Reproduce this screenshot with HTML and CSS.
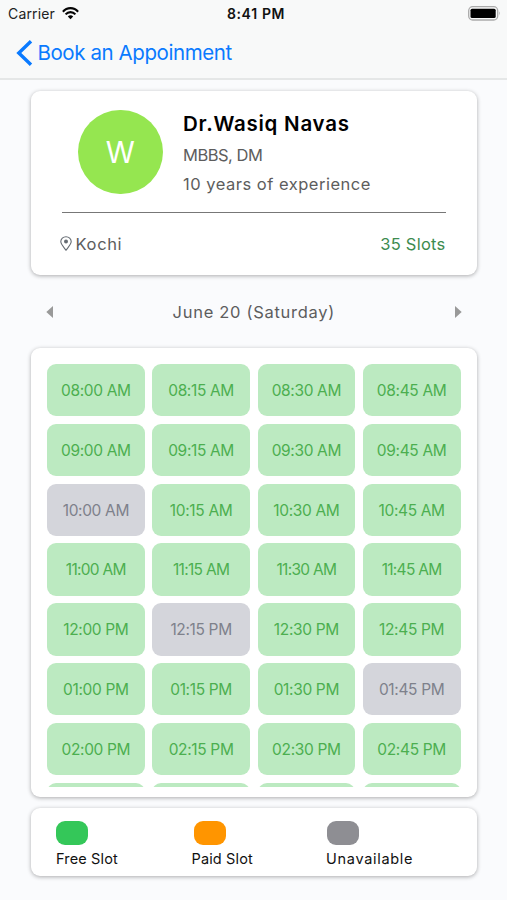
FILE: index.html
```html
<!DOCTYPE html>
<html lang="en">
<head>
<meta charset="utf-8">
<title>Book an Appoinment</title>
<link rel="stylesheet" href="styles.css">
</head>
<body>
<header class="top">
  <div class="status">
    <div class="carrier"><span>Carrier</span>
      <svg class="wifi" width="17" height="13" viewBox="0 0 17 13" fill="none" stroke="#050505" stroke-width="2.1"><path d="M.9 4.7C5-.1 12 -.1 16.100 4.700M3.600 7.400C6.300 4.300 10.700 4.300 13.400 7.400"/><path d="M8.500 12.300 5.800 9.500C7.200 7.900 9.800 7.900 11.200 9.500Z" fill="#050505" stroke="none"/></svg>
    </div>
    <div class="time">8:41 PM</div>
    <svg class="battery" width="33" height="15" viewBox="0 0 33 15"><rect x=".7" y=".7" width="29" height="13.300" rx="4" fill="#f8f9f9" stroke="#aaa" stroke-width="1.300"/><rect x="2.500" y="2.700" width="25.200" height="9.400" rx="1.600" fill="#000"/><path d="M31 5.200q1.500 2.100 0 4.200z" fill="#999"/></svg>
  </div>
  <div class="nav">
    <svg class="back" width="17" height="26" viewBox="0 0 17 26" fill="none" stroke="#0a7aff" stroke-width="3.400"><path d="M15 1.300 2.800 13 15 24.700"/></svg>
    <span>Book an Appoinment</span>
  </div>
</header>
<main>
  <section class="card doctor">
    <div class="profile">
      <div class="avatar">W</div>
      <div class="info">
        <h1>Dr.Wasiq Navas</h1>
        <p class="degree">MBBS, DM</p>
        <p class="years">10 years of experience</p>
      </div>
    </div>
    <div class="place">
      <div class="city"><svg width="12" height="15" viewBox="0 0 12 15"><path d="M6 14.200C4.300 11.600.8 8.600.8 5.600a5.200 4.900 0 0 1 10.400 0C11.200 8.600 7.700 11.600 6 14.200Z" fill="none" stroke="#666c73" stroke-width="1.100"/><circle cx="6" cy="5.600" r="2" fill="#666c73"/></svg><span>Kochi</span></div>
      <div class="count">35 Slots</div>
    </div>
  </section>
  <div class="date">
    <svg width="7" height="12" viewBox="0 0 7 12"><path d="M7 0v12L.3 6z" fill="#999"/></svg>
    <span>June 20 (Saturday)</span>
    <svg width="7" height="12" viewBox="0 0 7 12"><path d="M0 0v12l6.700-6z" fill="#999"/></svg>
  </div>
  <section class="card slots">
    <div class="grid">
      <div class="slot">08:00 AM</div><div class="slot">08:15 AM</div><div class="slot">08:30 AM</div><div class="slot">08:45 AM</div>
      <div class="slot">09:00 AM</div><div class="slot">09:15 AM</div><div class="slot">09:30 AM</div><div class="slot">09:45 AM</div>
      <div class="slot off">10:00 AM</div><div class="slot">10:15 AM</div><div class="slot">10:30 AM</div><div class="slot">10:45 AM</div>
      <div class="slot tight">11:00 AM</div><div class="slot tight">11:15 AM</div><div class="slot tight">11:30 AM</div><div class="slot tight">11:45 AM</div>
      <div class="slot">12:00 PM</div><div class="slot off">12:15 PM</div><div class="slot">12:30 PM</div><div class="slot">12:45 PM</div>
      <div class="slot">01:00 PM</div><div class="slot">01:15 PM</div><div class="slot">01:30 PM</div><div class="slot off">01:45 PM</div>
      <div class="slot">02:00 PM</div><div class="slot">02:15 PM</div><div class="slot">02:30 PM</div><div class="slot">02:45 PM</div>
      <div class="slot"></div><div class="slot"></div><div class="slot"></div><div class="slot"></div>
    </div>
  </section>
  <section class="card legend">
    <div class="key"><i class="swatch free"></i><span>Free Slot</span></div>
    <div class="key"><i class="swatch paid"></i><span>Paid Slot</span></div>
    <div class="key"><i class="swatch none"></i><span class="wide">Unavailable</span></div>
  </section>
</main>
</body>
</html>
```

FILE: styles.css
```css
* { box-sizing: border-box; margin: 0; }
body { font-family: Inter, "Liberation Sans", sans-serif; background: #fafbfd; height: 900px; overflow: hidden; }
svg { display: block; flex: none; }
.top { height: 80px; background: #f8f9f9; border-bottom: 2px solid #e5e7e7; }
.status { display: grid; grid-template-columns: 1fr auto 1fr; height: 27px; align-items: center; padding: 0 6px 0 8px; }
.carrier { display: flex; gap: 7px; align-items: center; font-size: 14px; letter-spacing: .15px; color: #222; }
.time { font-size: 14px; font-weight: 600; color: #111; letter-spacing: .65px; margin-left: 3px; }
.battery { justify-self: end; }
.nav { display: flex; align-items: center; height: 51px; padding-left: 16px; gap: 4.500px; font-size: 20.500px; color: #0a7aff; letter-spacing: -.42px; white-space: nowrap; }
main { padding: 11px 30.500px 0 31px; }
.card { background: #fff; border-radius: 9px; box-shadow: 0 1px 4px rgba(0, 0, 0, .32); }
.doctor { height: 184px; padding: 18.500px 31px 0; }
.profile { display: flex; height: 103.500px; padding-left: 16px; border-bottom: 1.500px solid #777; }
.avatar { width: 84.500px; height: 84.500px; border-radius: 50%; background: #95e650; color: #fff; font-size: 29.500px; font-weight: 400; line-height: 84px; text-align: center; }
.info { margin-left: 20.500px; color: #5d5d5d; font-size: 16.500px; white-space: nowrap; }
h1 { font-size: 20.500px; line-height: 27px; font-weight: 600; color: #000; letter-spacing: .75px; }
.degree { line-height: 29px; margin-top: 4px; letter-spacing: -.5px; }
.years { line-height: 29px; letter-spacing: .5px; }
.place { display: flex; justify-content: space-between; height: 61px; align-items: center; font-size: 16.500px; color: #5d5d5d; }
.city { display: flex; align-items: center; gap: 3.500px; margin-left: -2px; letter-spacing: .65px; }
.count { color: #3d8b4f; letter-spacing: .25px; }
.date { display: flex; justify-content: space-between; align-items: center; height: 73px; padding: 0 15px; font-size: 16.500px; letter-spacing: .7px; color: #5d5d5d; }
.slots { height: 448.500px; padding: 16px 16px 10px; }
.grid { display: grid; grid-template-columns: repeat(4, 1fr); grid-auto-rows: 52.300px; gap: 7.540px; height: 100%; overflow: hidden; }
.slot { background: #bceac1; border-radius: 9px; color: #4caf50; font-size: 15.500px; letter-spacing: -.35px; line-height: 53px; text-align: center; white-space: nowrap; }
.tight { letter-spacing: -.7px; }
.off { background: #d4d5db; color: #7e818b; }
.legend { height: 68px; margin-top: 11.500px; padding: 12.500px 25px 0; display: grid; grid-template-columns: 135.500px 134.500px 1fr; color: #111; font-size: 14.500px; letter-spacing: .15px; }
.key { display: flex; flex-direction: column; white-space: nowrap; }
.swatch { width: 32px; height: 24px; border-radius: 9px; }
.key span { line-height: 28px; }
.key .wide { letter-spacing: .7px; }
.free { background: #34c759; }
.paid { background: #ff9500; margin-left: 2px; }
.none { background: #8e8e93; margin-left: .5px; }
```
